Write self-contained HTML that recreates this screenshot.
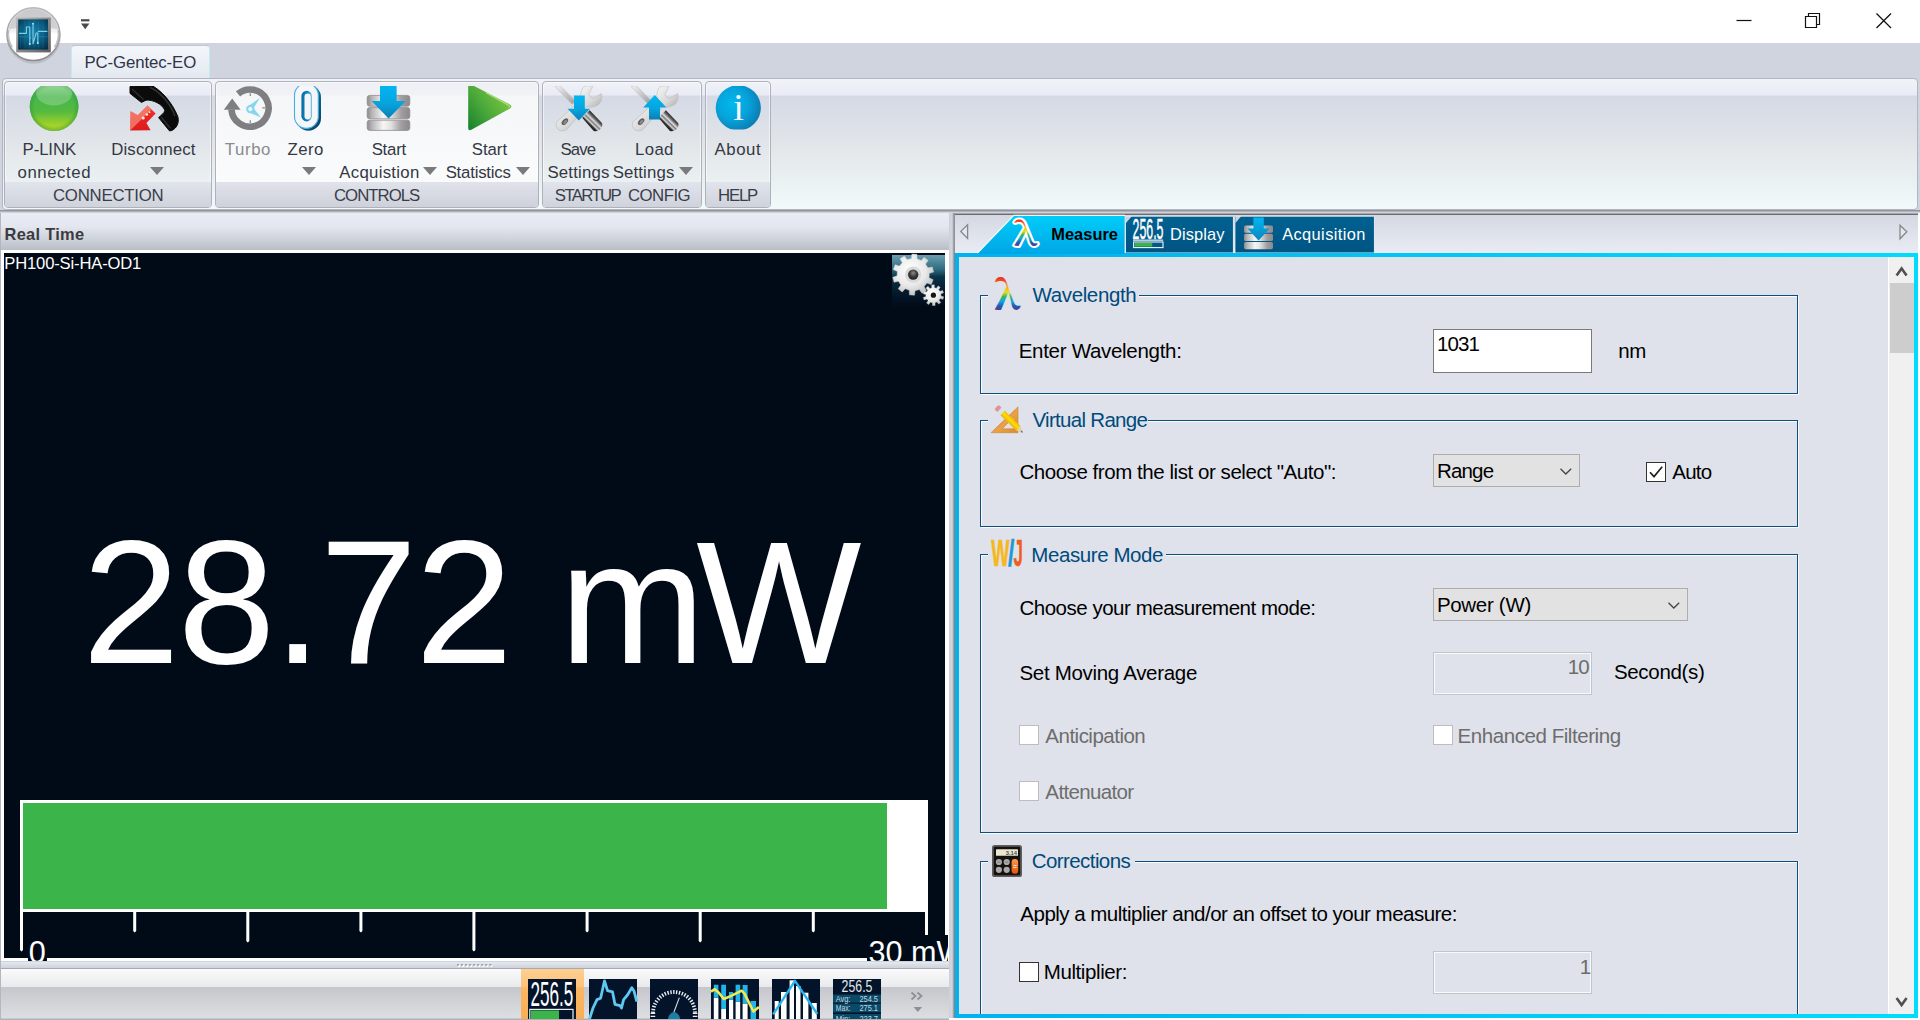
<!DOCTYPE html>
<html lang="en">
<head>
<meta charset="utf-8">
<title>PC-Gentec-EO</title>
<style>
*{box-sizing:border-box;margin:0;padding:0}
html,body{width:1920px;height:1020px;overflow:hidden;background:#fff;font-family:"Liberation Sans",sans-serif;color:#000}
.abs{position:absolute}
svg{position:absolute;overflow:visible}
#app{position:relative;width:1920px;height:1020px;overflow:hidden;background:#fff}
.t{position:absolute;white-space:nowrap;line-height:1;font-family:"Liberation Sans",sans-serif}
#tabrow{left:0;top:43px;width:1920px;height:168px;background:#cfd4de}
#maintab{left:71px;top:45px;width:139px;height:35px;background:linear-gradient(#f4f7fa,#e9edf4 60%,#e3e7f0);border:1px solid #c4eaf3;border-top-color:#c2c5cc;border-bottom:none;border-radius:4px 4px 0 0}
#ribbon{left:2px;top:78px;width:1916px;height:132px;border:1px solid #b3b6be;border-radius:4px;background:linear-gradient(#f1f3f8 0,#e8ebf4 16px,#d4d9e5 17px,#e3e7ea 70px,#eff7f8 122px,#f1f9fa 100%)}
#ribshadow{left:0;top:210px;width:1920px;height:3px;background:linear-gradient(#85878d,#b9bcc3 60%,#dfe2e8)}
.grp{position:absolute;top:81px;height:127px;border:1px solid #aeb1b9;border-radius:4px;overflow:hidden;box-shadow:inset 0 0 0 1px rgba(255,255,255,.55)}
.grp .lab{position:absolute;left:0;right:0;bottom:0;height:25px;background:linear-gradient(#e1e4ec,#cfd3dc)}
.grp.hot{background:linear-gradient(#eef0f5 0,#f1f2f6 13px,#f5f6f8 14px,#fbfcfc 100%)}
.grp.hot .lab{background:linear-gradient(#e0e3eb,#ced1da)}
.dd{position:absolute;width:0;height:0;border-left:7px solid transparent;border-right:7px solid transparent;border-top:8px solid #7a7a7a}
#leftbg{left:0;top:213px;width:955px;height:807px;background:linear-gradient(90deg,#b4b7bf 0,#b4b7bf 1px,#d6d9e1 1px)}
#rthead{left:1px;top:213px;width:948px;height:37px;background:linear-gradient(#e9ecf5 0,#e4e7f0 35%,#cfd3dc 70%,#b9bdc6 100%)}
#white{left:1px;top:250px;width:948px;height:711px;background:#fff}
#black{left:4px;top:253px;width:941px;height:705px;background:#010b18;overflow:hidden}
#vsplit{left:949px;top:213px;width:6px;height:807px;background:linear-gradient(90deg,#cdd0d8 0,#d3d6de 3px,#b4b7be 4px,#8c8e94 5px,#77797e 6px)}
#hsplit{left:1px;top:961px;width:948px;height:8px;background:linear-gradient(#b9bcc4 0,#e5e9f2 1px,#dde1ea 3px,#ced2db 7px,#a6a9b2 7px)}
#tbar{left:1px;top:969px;width:948px;height:51px;background:linear-gradient(#fafafb 0,#e9eaed 18px,#c5c7cc 18px,#dcdee2 49px,#b0b2b8 50px)}
</style>
</head>
<body>
<div id="app">
<div id="tabrow" class="abs"></div>
<div id="maintab" class="abs"></div>
<span class="t" style="left:84.42px;top:55.00px;font-size:16.8px;color:#2f3446;letter-spacing:-0.089px;">PC-Gentec-EO</span>
<div id="ribbon" class="abs"></div>
<div id="ribshadow" class="abs"></div>
<div class="grp" style="left:4px;width:208px"><div class="lab"></div></div>
<div class="grp hot" style="left:215px;width:324px"><div class="lab"></div></div>
<div class="grp" style="left:542px;width:160px"><div class="lab"></div></div>
<div class="grp" style="left:705px;width:66px"><div class="lab"></div></div>
<span class="t" style="left:52.96px;top:188.00px;font-size:16.8px;color:#3a3d48;letter-spacing:-0.225px;">CONNECTION</span>
<span class="t" style="left:333.96px;top:188.00px;font-size:16.8px;color:#3a3d48;letter-spacing:-0.992px;">CONTROLS</span>
<div><span class="t" style="left:554.84px;top:188.00px;font-size:16.8px;color:#3a3d48;letter-spacing:-1.638px;">STARTUP</span> <span class="t" style="left:627.96px;top:188.00px;font-size:16.8px;color:#3a3d48;letter-spacing:-0.510px;">CONFIG</span></div>
<span class="t" style="left:718.12px;top:188.00px;font-size:16.8px;color:#3a3d48;letter-spacing:-1.210px;">HELP</span>
<span class="t" style="left:22.62px;top:142.00px;font-size:16.8px;color:#343844;letter-spacing:-0.117px;">P-LINK</span>
<div class="abs" style="left:17.5px;top:163px;width:76px;height:24px;overflow:hidden"><span class="t" style="left:-12.70px;top:2px;font-size:16.8px;color:#343844;letter-spacing:0.564px">Connected</span></div>
<span class="t" style="left:111.22px;top:142.00px;font-size:16.8px;color:#343844;letter-spacing:0.143px;">Disconnect</span>
<span class="t" style="left:224.83px;top:142.00px;font-size:16.8px;color:#8b8b8f;letter-spacing:0.600px;">Turbo</span>
<span class="t" style="left:287.48px;top:142.00px;font-size:16.8px;color:#343844;letter-spacing:0.456px;">Zero</span>
<span class="t" style="left:371.64px;top:142.00px;font-size:16.8px;color:#343844;letter-spacing:-0.202px;">Start</span>
<span class="t" style="left:339.27px;top:165.00px;font-size:16.8px;color:#343844;letter-spacing:0.288px;">Acquistion</span>
<span class="t" style="left:471.84px;top:142.00px;font-size:16.8px;color:#343844;letter-spacing:-0.052px;">Start</span>
<span class="t" style="left:445.64px;top:165.00px;font-size:16.8px;color:#343844;letter-spacing:-0.206px;">Statistics</span>
<span class="t" style="left:560.54px;top:142.00px;font-size:16.8px;color:#343844;letter-spacing:-0.864px;">Save</span>
<span class="t" style="left:547.44px;top:165.00px;font-size:16.8px;color:#343844;letter-spacing:0.180px;">Settings</span>
<span class="t" style="left:635.12px;top:142.00px;font-size:16.8px;color:#343844;letter-spacing:0.330px;">Load</span>
<span class="t" style="left:612.64px;top:165.00px;font-size:16.8px;color:#343844;letter-spacing:0.152px;">Settings</span>
<span class="t" style="left:714.47px;top:142.00px;font-size:16.8px;color:#343844;letter-spacing:0.588px;">About</span>
<div class="dd" style="left:150px;top:166.7px"></div>
<div class="dd" style="left:302.2px;top:166.7px"></div>
<div class="dd" style="left:423px;top:166.7px"></div>
<div class="dd" style="left:516px;top:166.7px"></div>
<div class="dd" style="left:679px;top:166.7px"></div>

<svg style="left:0;top:0" width="1920" height="215" viewBox="0 0 1920 215">
<defs>
<clipPath id="cpTop"><rect x="0" y="86" width="1920" height="46"/></clipPath>
<linearGradient id="gBall" x1="0" y1="0" x2="0" y2="1"><stop offset="0" stop-color="#86cf83"/><stop offset=".3" stop-color="#45b64b"/><stop offset=".6" stop-color="#55ba3f"/><stop offset=".85" stop-color="#9ccf2c"/><stop offset="1" stop-color="#bcd92a"/></linearGradient>
<radialGradient id="gBallEdge" cx=".5" cy=".5" r=".5"><stop offset=".8" stop-color="#2d9a3a" stop-opacity="0"/><stop offset="1" stop-color="#2d9a3a" stop-opacity=".55"/></radialGradient>
<linearGradient id="gRed" x1="0" y1="0" x2="0" y2="1"><stop offset="0" stop-color="#ee3a2c"/><stop offset=".5" stop-color="#e62323"/><stop offset="1" stop-color="#dc1c1f"/></linearGradient>
<linearGradient id="gCyan" x1="0" y1="0" x2="0" y2="1"><stop offset="0" stop-color="#00b7f3"/><stop offset=".55" stop-color="#06a5df"/><stop offset="1" stop-color="#0b7fb4"/></linearGradient>
<linearGradient id="gMetal" x1="0" y1="0" x2="1" y2="0"><stop offset="0" stop-color="#8e8a8d"/><stop offset=".12" stop-color="#b9b7b9"/><stop offset=".38" stop-color="#f6f6f6"/><stop offset=".55" stop-color="#e3e3e3"/><stop offset=".8" stop-color="#a29da0"/><stop offset="1" stop-color="#8b878a"/></linearGradient>
<linearGradient id="gPlay" x1="0" y1="1" x2="1" y2="0.2"><stop offset="0" stop-color="#16802c"/><stop offset=".45" stop-color="#4aa83a"/><stop offset="1" stop-color="#86cc42"/></linearGradient>
<radialGradient id="gInfo" cx=".38" cy=".42" r=".62"><stop offset="0" stop-color="#00b9ee"/><stop offset=".55" stop-color="#06a3db"/><stop offset="1" stop-color="#0b7fb5"/></radialGradient>
<linearGradient id="gShaft" x1="0" y1="0" x2="1" y2="1"><stop offset="0" stop-color="#f4f4f4"/><stop offset="1" stop-color="#9a9a9a"/></linearGradient>
<linearGradient id="gHandle" gradientUnits="userSpaceOnUse" x1="32" y1="38.4" x2="39.8" y2="30.4"><stop offset="0" stop-color="#1c1c1c"/><stop offset=".16" stop-color="#333"/><stop offset=".3" stop-color="#d4d4d4"/><stop offset=".46" stop-color="#7c7c7c"/><stop offset=".6" stop-color="#dedede"/><stop offset=".8" stop-color="#6c6c6c"/><stop offset="1" stop-color="#2c2c2c"/></linearGradient>
<linearGradient id="gWrench" x1="0" y1="0" x2="1" y2="1"><stop offset="0" stop-color="#fafafa"/><stop offset=".6" stop-color="#d8d8d8"/><stop offset="1" stop-color="#a8a8a8"/></linearGradient>
<linearGradient id="gZeroSh" x1="0" y1="0" x2="1" y2="1"><stop offset="0" stop-color="#2d93c4"/><stop offset=".5" stop-color="#0f6c99"/><stop offset="1" stop-color="#053c5c"/></linearGradient>
<linearGradient id="gZeroIn" x1="0" y1="0" x2="1" y2="0"><stop offset="0" stop-color="#0a6ea4"/><stop offset=".6" stop-color="#0b86c0"/><stop offset="1" stop-color="#7cc0dc"/></linearGradient>
<g id="tools">
  <path d="M-0.8 0.6 L4.4 -0.6 L20.2 15.4 L16.4 18.2Z" fill="url(#gShaft)" stroke="#bdbdbd" stroke-width=".5"/>
  <path d="M1 36 L22 17 L28.4 23.4 L11 43.8 Q6 46.6 2.4 43.4 Q-1 40 1 36Z" fill="url(#gWrench)" stroke="#b9b9b9" stroke-width=".6"/>
  <ellipse cx="9.3" cy="35.6" rx="4" ry="2.3" transform="rotate(-47 9.3 35.6)" fill="#5a5a5a"/>
  <ellipse cx="9.6" cy="35.9" rx="2.6" ry="1.3" transform="rotate(-47 9.6 35.9)" fill="#8a8a8a"/>
  <path d="M27 2 Q30 -1.4 37.2 0.4 L33.2 8.2 Q33.6 11.8 37.4 12.4 L45.8 7.6 Q47.6 14 42.8 18.8 Q37 22.6 31.2 20.6 L28.4 23.4 L22 17 L25.4 13.8 Q24 7 27 2Z" fill="url(#gWrench)" stroke="#bdbdbd" stroke-width=".6"/>
  <path d="M26.6 31.7 L34.1 24.2 L46.3 37.1 Q47.6 40.2 44.6 43.2 Q41.2 46.2 37.9 44.7Z" fill="url(#gHandle)"/>
</g>
</defs>
<!-- app button -->
<defs>
<linearGradient id="gOrb" x1="0" y1="0" x2="0" y2="1"><stop offset="0" stop-color="#d4d4d6"/><stop offset=".45" stop-color="#f2f2f3"/><stop offset=".5" stop-color="#ffffff"/><stop offset="1" stop-color="#ffffff"/></linearGradient>
<linearGradient id="gOrbRing" x1="0" y1="0" x2="0" y2="1"><stop offset="0" stop-color="#b9b9bb"/><stop offset="1" stop-color="#8c8c90"/></linearGradient>
<radialGradient id="gLogo" cx=".5" cy=".42" r=".7"><stop offset="0" stop-color="#1583ae"/><stop offset=".55" stop-color="#0a5c80"/><stop offset="1" stop-color="#032f48"/></radialGradient>
<linearGradient id="gFrame" x1="0" y1="0" x2="1" y2="1"><stop offset="0" stop-color="#b8b8b8"/><stop offset="1" stop-color="#5e5e5e"/></linearGradient>
</defs>
<ellipse cx="33.6" cy="36.4" rx="27.2" ry="27.4" fill="#8d8d93" opacity=".32"/>
<circle cx="33.4" cy="34.2" r="26.4" fill="url(#gOrb)" stroke="url(#gOrbRing)" stroke-width="1.5"/>
<path d="M8.6 29.4 A25.4 25.4 0 0 1 58.2 29.4 Q33.4 23 8.6 29.4Z" fill="#bfbfc3" opacity=".6"/>
<path d="M8.2 30 A25.6 25.6 0 0 0 12 47.5 M58.6 30 A25.6 25.6 0 0 1 54.8 47.5" fill="none" stroke="#a9a9ad" stroke-width="2.4" opacity=".7"/>
<rect x="16.2" y="17.6" width="34.6" height="34.8" fill="url(#gFrame)"/>
<rect x="18.2" y="19.4" width="29.8" height="30.2" fill="url(#gLogo)"/>
<path d="M20.5 25 V48 M25 21 V48 M29.5 21 V48 M34 21 V48 M38.5 21 V48 M43 21 V48" stroke="#3aa6cf" stroke-width=".5" opacity=".35"/>
<path d="M19 33.4 H26.4 V27 H29.8 V43.8 M29.8 38 H31 M33 23.4 V43.8 L36.2 33 H37.8 V42.6 M37.8 31.4 H47.4" fill="none" stroke="#8fd8f0" stroke-width="1.1" stroke-linejoin="round" opacity=".9"/>
<path d="M19 36.8 H47.6" stroke="#2f9fc9" stroke-width=".7" opacity=".55"/>
<circle cx="29.8" cy="44" r="1" fill="#b8ecfa"/><circle cx="37.8" cy="43" r="1" fill="#b8ecfa"/><circle cx="33" cy="23.6" r=".9" fill="#b8ecfa"/>
<!-- QAT -->
<rect x="81" y="19.2" width="8.4" height="2.2" fill="#4a4a4a"/>
<path d="M81 23.4 H89.4 L85.2 29.2Z" fill="#4a4a4a"/>
<!-- window buttons -->
<path d="M1736.5 20.5 H1751.5" stroke="#111" stroke-width="1.2"/>
<path d="M1805.5 16.5 H1816.5 V27.5 H1805.5Z M1808.5 16 V13.5 H1819.5 V24.5 H1817" fill="none" stroke="#111" stroke-width="1.2"/>
<path d="M1876.5 13.5 L1891 28 M1891 13.5 L1876.5 28" stroke="#111" stroke-width="1.3"/>

<!-- P-LINK ball -->
<g clip-path="url(#cpTop)">
<circle cx="54.1" cy="106.6" r="24.4" fill="url(#gBall)"/>
<circle cx="54.1" cy="106.6" r="24.4" fill="url(#gBallEdge)"/>
<ellipse cx="54.1" cy="93" rx="18" ry="12.5" fill="#ffffff" opacity=".22"/>
</g>
<!-- phone -->
<g clip-path="url(#cpTop)">
<path d="M130 86.6 L150.6 84.8 C161 90 172 102 177.8 116.6 C179.8 124 175.4 130.2 169.6 131 L158.6 117.6 C161 115 164.2 113.6 164.8 110.4 C162.6 104 152.4 99.4 146 100.2 L141.4 102.4 L130 93.4Z" fill="#0b0b0b" stroke="#0b0b0b" stroke-width="1" stroke-linejoin="round"/>
<path d="M150 87.4 C160 92 170 103 175 116" fill="none" stroke="#5a5a5a" stroke-width="1.4" opacity=".55"/>
<path d="M132 89 L143.6 99.6 M161.2 117 L170.4 128.4" stroke="#4c4c4c" stroke-width="1.2" opacity=".6"/>
<path d="M130.2 130.6 L130.6 111.2 L137.8 115.2 L147.5 105.6 L155.6 113.4 L146.4 123.1 L150.6 130.2Z" fill="url(#gRed)"/>
<path d="M130.2 130.6 L130.6 111.2 L137.8 115.2 L147.5 105.6 L151.5 109.5Z" fill="#f8927a" opacity=".7"/>
<circle cx="143.2" cy="118" r="1.6" fill="#ffe9dc"/><circle cx="146.8" cy="114.5" r="1.3" fill="#ffe9dc"/><circle cx="149.5" cy="112.2" r=".9" fill="#ffe9dc"/>
</g>
<!-- Turbo -->
<path d="M238.04 93.85 A18.6 18.6 0 1 1 231.45 109.4" fill="none" stroke="#7f7f81" stroke-width="6.6"/>
<path d="M232.2 98.4 L223.8 109.8 L240.6 109.8Z" fill="#7f7f81"/>
<path d="M250.3 93.2 V96 M265 107.8 H262.2 M250.3 123 V120.2" stroke="#8e8e90" stroke-width="1.3"/>
<path d="M248.4 106 L260 97.8 L253.6 108.2 L261 117.6 L248.8 112.2Z" fill="#86d6ee"/>
<circle cx="250.3" cy="109.1" r="4.2" fill="#86d6ee"/><circle cx="250.3" cy="109.1" r="2.1" fill="#f3f6f9"/>
<!-- Zero -->
<g clip-path="url(#cpTop)">
<rect x="295.8" y="84.8" width="25.2" height="46" rx="12.6" fill="url(#gZeroSh)"/>
<rect x="294.5" y="83.4" width="23.8" height="45" rx="11.9" fill="#f5f6f9" stroke="#45afe0" stroke-width="1.1"/>
<rect x="301.4" y="90.8" width="10.5" height="30.6" rx="5.25" fill="url(#gZeroIn)"/>
<rect x="304.5" y="93.4" width="6.3" height="26" rx="3.15" fill="#f3f5f8"/>
</g>
<!-- Start acquisition -->
<g clip-path="url(#cpTop)">
<g stroke="#8f8b8e" stroke-width=".8"><rect x="367.2" y="95.4" width="42.6" height="10.8" rx="2.4" fill="url(#gMetal)"/>
<rect x="367.2" y="107.6" width="42.6" height="11.2" rx="2.4" fill="url(#gMetal)"/>
<rect x="367.2" y="120.2" width="42.6" height="10.2" rx="2.4" fill="url(#gMetal)"/></g>
<path d="M380 84 H396.6 V101 H405.8 L388.6 118.4 L371.6 101 H380Z" fill="url(#gCyan)"/>
</g>
<!-- Start statistics -->
<g clip-path="url(#cpTop)">
<path d="M468.2 85 Q468.2 83 471 84.4 L510 104.6 Q512.6 106.6 510 108.6 L471.4 129.8 Q468.2 131.2 468.2 128Z" fill="url(#gPlay)"/>
<path d="M486 92.8 L508.6 105.2 Q510 106.4 508.8 107.6" fill="none" stroke="#b2e384" stroke-width="1.1" opacity=".9"/>
</g>
<!-- Save settings -->
<g clip-path="url(#cpTop)">
<use href="#tools" x="555.6" y="86"/>
<path d="M574 95.4 H584.8 V108.8 H590 L578.8 120.4 L567.6 108.8 H574Z" fill="url(#gCyan)"/>
<use href="#tools" x="631.8" y="86"/>
<path d="M654.8 95 L666.4 107.4 H660 V119.6 H649 V107.4 H643.2Z" fill="url(#gCyan)"/>
</g>
<!-- About -->
<clipPath id="cpInfo"><rect x="700" y="86" width="80" height="43.5"/></clipPath>
<g clip-path="url(#cpInfo)">
<circle cx="738.3" cy="107.8" r="22.6" fill="url(#gInfo)"/>
<text x="738.6" y="120.2" text-anchor="middle" font-family="Liberation Serif,serif" font-size="38.5" fill="#f1f6fd">i</text>
</g>
</svg>

<div id="leftbg" class="abs"></div>
<div id="rthead" class="abs"></div>
<span class="t" style="left:4.52px;top:226.00px;font-size:16.4px;color:#3b3b3f;letter-spacing:0.308px;font-weight:bold;">Real Time</span>
<div id="white" class="abs"></div>
<div id="black" class="abs"></div>
<span class="t" style="left:4.24px;top:256.00px;font-size:16.6px;color:#fff;letter-spacing:-0.152px;">PH100-Si-HA-OD1</span>
<div><span class="t" style="left:82.22px;top:515.00px;font-size:175.5px;color:#fff;letter-spacing:-2.138px;">28.72</span> <span class="t" style="left:559.45px;top:515.00px;font-size:175px;color:#fff;letter-spacing:-8.900px;">mW</span></div>
<div class="abs" style="left:20px;top:800px;width:908px;height:112px;background:#fff"></div>
<div class="abs" style="left:23px;top:803px;width:864px;height:106px;background:#3bb44a"></div>
<svg style="left:0;top:0" width="950" height="1020"><path d="M20 911 H23 V950.0 L21.5 951.5 L20 950.0Z M133.2 911 H136.2 V931.0 L134.7 932.5 L133.2 931.0Z M246.3 911 H249.3 V941.0 L247.8 942.5 L246.3 941.0Z M359.4 911 H362.4 V931.0 L360.9 932.5 L359.4 931.0Z M472.4 911 H475.4 V950.0 L473.9 951.5 L472.4 950.0Z M585.6 911 H588.6 V931.0 L587.1 932.5 L585.6 931.0Z M698.7 911 H701.7 V941.0 L700.2 942.5 L698.7 941.0Z M811.8 911 H814.8 V931.0 L813.3 932.5 L811.8 931.0Z M925 911 H928 V950.0 L926.5 951.5 L925 950.0Z" fill="#fff"/></svg>
<div class="abs" style="left:28px;top:935px;width:19px;height:26px;background:#010b18"></div>
<div class="abs" style="left:867px;top:935px;width:81px;height:26px;background:#010b18;overflow:hidden"></div>
<div class="abs" style="left:0;top:930px;width:948px;height:31px;overflow:hidden"><span class="t" style="left:28.81px;top:7.00px;font-size:30.6px;color:#fff;">0</span><span class="t" style="left:868.44px;top:7.00px;font-size:30.6px;color:#fff;">30 mW</span></div>

<svg style="left:892px;top:255px" width="53" height="52" viewBox="892 255 53 52">
<defs>
<linearGradient id="gGearBg" x1="0" y1="0" x2="0" y2="1"><stop offset="0" stop-color="#6a9fb0"/><stop offset=".28" stop-color="#2e6a80"/><stop offset=".42" stop-color="#0b3247"/><stop offset=".75" stop-color="#04172a"/><stop offset="1" stop-color="#010b18"/></linearGradient>
<radialGradient id="gGear" cx=".42" cy=".38" r=".7"><stop offset="0" stop-color="#ffffff"/><stop offset=".55" stop-color="#e9e9e9"/><stop offset="1" stop-color="#b9b9b9"/></radialGradient>
<radialGradient id="gHub" cx=".5" cy=".35" r=".7"><stop offset="0" stop-color="#8a8a8a"/><stop offset=".5" stop-color="#3c3c3c"/><stop offset="1" stop-color="#1a1a1a"/></radialGradient>
</defs>
<rect x="892" y="255" width="53" height="52" fill="url(#gGearBg)"/>
<path d="M929.08 277.82 L933.16 279.70 L931.26 284.50 L927.00 283.09 L924.15 286.54 L926.35 290.46 L921.99 293.23 L919.37 289.58 L915.05 290.69 L914.52 295.16 L909.36 294.84 L909.39 290.34 L905.23 288.71 L902.18 292.00 L898.20 288.72 L900.86 285.10 L898.46 281.33 L894.05 282.20 L892.77 277.20 L897.05 275.84 L897.32 271.38 L893.24 269.50 L895.14 264.70 L899.40 266.11 L902.25 262.66 L900.05 258.74 L904.41 255.97 L907.03 259.62 L911.35 258.51 L911.88 254.04 L917.04 254.36 L917.01 258.86 L921.17 260.49 L924.22 257.20 L928.20 260.48 L925.54 264.10 L927.94 267.87 L932.35 267.00 L933.63 272.00 L929.35 273.36Z" fill="url(#gGear)" stroke="#c9c9c9" stroke-width=".5" stroke-linejoin="round"/>
<circle cx="913.2" cy="274.6" r="8.2" fill="#d9d9d9"/>
<circle cx="913.2" cy="274.6" r="5.2" fill="url(#gHub)"/>
<path d="M940.96 295.96 L943.68 296.76 L942.97 299.27 L940.24 298.52 L939.07 300.26 L940.80 302.50 L938.75 304.12 L936.98 301.90 L935.02 302.63 L935.10 305.46 L932.49 305.56 L932.36 302.73 L930.34 302.16 L928.74 304.50 L926.58 303.05 L928.13 300.68 L926.84 299.03 L924.17 299.98 L923.27 297.54 L925.92 296.53 L925.84 294.44 L923.12 293.64 L923.83 291.13 L926.56 291.88 L927.73 290.14 L926.00 287.90 L928.05 286.28 L929.82 288.50 L931.78 287.77 L931.70 284.94 L934.31 284.84 L934.44 287.67 L936.46 288.24 L938.06 285.90 L940.22 287.35 L938.67 289.72 L939.96 291.37 L942.63 290.42 L943.53 292.86 L940.88 293.87Z" fill="url(#gGear)" stroke="#c9c9c9" stroke-width=".4" stroke-linejoin="round"/>
<circle cx="933.4" cy="295.2" r="2.6" fill="#151515"/>
</svg>

<div id="vsplit" class="abs"></div>
<div id="hsplit" class="abs"></div>
<div id="tbar" class="abs"></div>

<svg style="left:0;top:960px" width="950" height="60" viewBox="0 960 950 60">
<defs>
<linearGradient id="gSel" x1="0" y1="0" x2="0" y2="1"><stop offset="0" stop-color="#fdd093"/><stop offset=".35" stop-color="#fcc27a"/><stop offset=".37" stop-color="#fbb765"/><stop offset="1" stop-color="#f9ad55"/></linearGradient>
<clipPath id="cpB"><rect x="0" y="960" width="950" height="59"/></clipPath>
</defs>
<g fill="#fdfdfe"><rect x="458.00" y="965" width="2" height="2"/><rect x="462.04" y="965" width="2" height="2"/><rect x="466.08" y="965" width="2" height="2"/><rect x="470.12" y="965" width="2" height="2"/><rect x="474.16" y="965" width="2" height="2"/><rect x="478.20" y="965" width="2" height="2"/><rect x="482.24" y="965" width="2" height="2"/><rect x="486.28" y="965" width="2" height="2"/><rect x="490.32" y="965" width="2" height="2"/></g>
<g fill="#9a9ea8"><rect x="457.00" y="964" width="2" height="1.6"/><rect x="461.04" y="964" width="2" height="1.6"/><rect x="465.08" y="964" width="2" height="1.6"/><rect x="469.12" y="964" width="2" height="1.6"/><rect x="473.16" y="964" width="2" height="1.6"/><rect x="477.20" y="964" width="2" height="1.6"/><rect x="481.24" y="964" width="2" height="1.6"/><rect x="485.28" y="964" width="2" height="1.6"/><rect x="489.32" y="964" width="2" height="1.6"/></g>
<g clip-path="url(#cpB)">
<rect x="521" y="969" width="63" height="51" fill="url(#gSel)"/>
<rect x="528" y="979" width="48" height="41" fill="#03142a"/><rect x="589" y="979" width="48" height="41" fill="#03142a"/><rect x="650" y="979" width="48" height="41" fill="#03142a"/><rect x="711" y="979" width="48" height="41" fill="#03142a"/><rect x="772" y="979" width="48" height="41" fill="#03142a"/><rect x="833" y="979" width="48" height="41" fill="#03142a"/>
<!-- 1: numeric -->
<text x="530.4" y="1005.8" font-family="Liberation Sans,sans-serif" font-size="35.4" fill="#fff" textLength="42.8" lengthAdjust="spacingAndGlyphs">256.5</text>
<rect x="529.8" y="1009.4" width="43.2" height="12" fill="none" stroke="#e8eef0" stroke-width="1.2"/>
<rect x="531" y="1010.4" width="28" height="10" fill="#3bb44a"/>
<!-- 2: line -->
<path d="M589.2 1020 L593 1008 L597 999.6 L600.6 998.2 L604.5 980.8 L607.5 990.7 L612.5 991.8 L615 1004.4 L620 1005.6 L621.5 1008 L623.6 999.6 L627.5 995 L631.8 987.8 L634 991 L636.8 1001.6" fill="none" stroke="#5fc8f0" stroke-width="2.8" stroke-linejoin="round"/>
<!-- 3: gauge -->
<path d="M653 1013 A21 21 0 0 1 695 1013" fill="none" stroke="#e8eef2" stroke-width="3.8" stroke-dasharray="1.4 1.5"/>
<path d="M650.6 1013.4 H655.2 M650.6 1016.4 H655.2 M692.8 1013.4 H697.4 M692.8 1016.4 H697.4" stroke="#e8eef2" stroke-width="1.2"/>
<path d="M673.8 1012.5 L679.3 997.6" stroke="#d8e0e4" stroke-width="1.1"/>
<path d="M667.8 1020 Q668.4 1014 674 1011.6 Q679.8 1014 680.4 1020Z" fill="#1a7fa6"/>
<!-- 4: bars + line -->
<g fill="#fff"><rect x="713.8" y="997.6" width="4.6" height="24"/><rect x="721.2" y="1009" width="4.8" height="12"/><rect x="729" y="999.6" width="4.2" height="22"/><rect x="735.6" y="1001.6" width="4.6" height="20"/><rect x="742.6" y="1003.5" width="5" height="18"/></g>
<g fill="#1fb4ec"><rect x="713.8" y="984.7" width="4.6" height="12.9"/><rect x="721.2" y="984.7" width="4.8" height="24.3"/><rect x="729" y="992" width="4.2" height="7.6"/><rect x="735.6" y="984.7" width="4.6" height="16.9"/><rect x="742.6" y="985" width="5" height="18.5"/><rect x="750.5" y="1001" width="5.5" height="20"/></g>
<path d="M711 991.7 L714.8 989.2 L718.8 992.7 L723.8 999 L731.7 995.6 L741.6 990.7 L744.5 993.6 L753.4 1011.5 L758.9 1007" fill="none" stroke="#f6e84e" stroke-width="2.6" stroke-linejoin="round"/>
<!-- 5: histogram -->
<g fill="#fff"><rect x="774.7" y="1001" width="4" height="20"/><rect x="781" y="992" width="5.6" height="29"/><rect x="789.6" y="980.3" width="4.4" height="41"/><rect x="796" y="986" width="4.5" height="35"/><rect x="803" y="992.7" width="5.4" height="29"/><rect x="811.8" y="1003" width="5" height="18"/></g>
<path d="M773.2 1014.4 L795 980.8 L817.3 1014" fill="none" stroke="#2bb5ef" stroke-width="2.4" stroke-linejoin="round"/>
<!-- 6: stats -->
<text x="841.6" y="991.8" font-family="Liberation Sans,sans-serif" font-size="15.6" fill="#e4eaee" textLength="30.8" lengthAdjust="spacingAndGlyphs">256.5</text>
<rect x="833" y="994.6" width="48" height="8" fill="#0b4a67"/><rect x="833" y="1003.6" width="48" height="8.8" fill="#0b4a67"/><rect x="833" y="1014" width="48" height="8" fill="#0b4a67"/>
<g font-family="Liberation Sans,sans-serif" font-size="8.6" fill="#c4d9e3"><text x="835.8" y="1001.8" textLength="14.6" lengthAdjust="spacingAndGlyphs">Avg:</text><text x="859.4" y="1001.8" textLength="18.6" lengthAdjust="spacingAndGlyphs">254.5</text>
<text x="835.8" y="1011" textLength="14.6" lengthAdjust="spacingAndGlyphs">Max:</text><text x="859.4" y="1011" textLength="18.6" lengthAdjust="spacingAndGlyphs">275.1</text>
<text x="835.8" y="1021.6" textLength="14.6" lengthAdjust="spacingAndGlyphs">Min:</text><text x="859.4" y="1021.6" textLength="18.6" lengthAdjust="spacingAndGlyphs">223.7</text></g>
</g>
<path d="M911.5 992.5 L915.5 996 L911.5 999.5 M917.5 992.5 L921.5 996 L917.5 999.5" fill="none" stroke="#8d9096" stroke-width="1.8"/>
<path d="M913.6 1007 H922 L917.8 1012Z" fill="#8d9096"/>
</svg>

<div class="abs" style="left:954px;top:213px;width:964px;height:40px;background:linear-gradient(#a4a7af 0,#a4a7af 1px,#6c6c6f 1px,#6c6c6f 2px,#d4d8e2 2px,#e9ecf5 100%);border-left:1px solid #8f9299"></div>
<div class="abs" style="left:955px;top:252.5px;width:963px;height:765px;background:linear-gradient(90deg,#00b2ee,#00dcfb)"></div>
<div class="abs" style="left:1918px;top:213px;width:2px;height:807px;background:#fff"></div>
<div class="abs" style="left:949px;top:1018px;width:971px;height:2px;background:#fff"></div>
<div class="abs" style="left:959px;top:257px;width:954.5px;height:756.7px;background:#dfe2ea"></div>
<div class="abs" style="left:1888px;top:257px;width:26px;height:757px;background:linear-gradient(90deg,#fff 0,#fff 1px,#f0f0f0 1px)"></div>
<div class="abs" style="left:1890px;top:283px;width:24px;height:70px;background:#cdcdcd"></div>
<svg style="left:1888px;top:257px" width="26" height="757"><path d="M8.6 18.4 L13.6 11.4 L18.6 18.4 M8.6 741 L13.6 748 L18.6 741" fill="none" stroke="#505050" stroke-width="2.6"/></svg>

<svg style="left:954px;top:213px" width="966" height="45" viewBox="954 213 966 45">
<defs>
<linearGradient id="gTabA" x1="0" y1="0" x2="0" y2="1"><stop offset="0" stop-color="#00cdf9"/><stop offset="1" stop-color="#00a6e6"/></linearGradient>
<linearGradient id="gTabB" x1="0" y1="0" x2="0" y2="1"><stop offset="0" stop-color="#006293"/><stop offset="1" stop-color="#005482"/></linearGradient>
<linearGradient id="gRain" x1="0" y1="0" x2="0" y2="1"><stop offset="0" stop-color="#e8452c"/><stop offset=".22" stop-color="#f2a21e"/><stop offset=".4" stop-color="#e8d820"/><stop offset=".58" stop-color="#3fb54a"/><stop offset=".78" stop-color="#1d7fd0"/><stop offset="1" stop-color="#6a2fa0"/></linearGradient>
<linearGradient id="gMetal2" x1="0" y1="0" x2="1" y2="0"><stop offset="0" stop-color="#8e8a8d"/><stop offset=".12" stop-color="#b9b7b9"/><stop offset=".38" stop-color="#f6f6f6"/><stop offset=".55" stop-color="#e3e3e3"/><stop offset=".8" stop-color="#a29da0"/><stop offset="1" stop-color="#8b878a"/></linearGradient>
<linearGradient id="gCyan2" x1="0" y1="0" x2="0" y2="1"><stop offset="0" stop-color="#00b7f3"/><stop offset="1" stop-color="#0b86bd"/></linearGradient>
</defs>
<path d="M960.8 231.4 L967.6 224.8 V238.4Z" fill="#e4e7ee" stroke="#85878c" stroke-width="1.3"/>
<path d="M1906.8 231.8 L1900 225.2 V238.8Z" fill="#e4e7ee" stroke="#85878c" stroke-width="1.3"/>
<path d="M1126 216 H1233 V252.5 H1126Z" fill="url(#gTabB)"/>
<path d="M1235.4 216 H1374 V252.5 H1235.4Z" fill="url(#gTabB)"/>
<path d="M1126 216 L1132 216 L1126 223Z M1235.4 216 L1241.4 216 L1235.4 223Z" fill="#c9d3df"/>
<path d="M977 254 L1013.6 215.6 H1124.6 V254Z" fill="url(#gTabA)"/>
<path d="M977.4 253 L1013.8 215.4 H1125" fill="none" stroke="#f2f6fa" stroke-width="1.3"/>
<!-- lambda in tab -->
<linearGradient id="gRainT" gradientUnits="userSpaceOnUse" x1="0" y1="-26.6" x2="0" y2="0.5"><stop offset="0" stop-color="#ee3524"/><stop offset=".15" stop-color="#f26a21"/><stop offset=".3" stop-color="#fbb515"/><stop offset=".42" stop-color="#e6e01e"/><stop offset=".56" stop-color="#3db54a"/><stop offset=".7" stop-color="#10a8e0"/><stop offset=".85" stop-color="#1c5db0"/><stop offset="1" stop-color="#6d2a90"/></linearGradient>
<g transform="translate(1013.4 246.3) scale(1.24 1)"><text x="0" y="0" font-family="Noto Serif CJK SC,Liberation Serif,serif" font-weight="500" font-size="32" fill="url(#gRainT)" stroke="#fff" stroke-width="3.8" stroke-linejoin="round" paint-order="stroke">λ</text></g>
<!-- 256.5 icon -->
<text x="1132.6" y="238.8" font-family="Liberation Sans,sans-serif" font-size="30" fill="#fff" stroke="#fff" stroke-width=".5" textLength="30.8" lengthAdjust="spacingAndGlyphs">256.5</text>
<rect x="1133" y="239.6" width="30.2" height="1.1" fill="#fff"/>
<rect x="1133.6" y="242" width="29.4" height="5.6" fill="#005988" stroke="#f2f5f7" stroke-width="1.1"/>
<rect x="1134.6" y="243" width="17.6" height="3.6" fill="#3bb44a"/>
<!-- db icon -->
<rect x="1244" y="225.4" width="29" height="7.4" rx="1.6" fill="url(#gMetal2)"/>
<rect x="1244" y="233.7" width="29" height="7.3" rx="1.6" fill="url(#gMetal2)"/>
<rect x="1244" y="241.9" width="29" height="7.3" rx="1.6" fill="url(#gMetal2)"/>
<path d="M1253.4 217.4 H1263.8 V228.4 H1269.8 L1258.6 240.6 L1247.4 228.4 H1253.4Z" fill="url(#gCyan2)"/>
<path d="M1126 216.4 H1233.4 V252.5 M1235.4 216.4 H1374.4 V252.5" fill="none" stroke="#dfe6ee" stroke-width="1" opacity=".8"/>
</svg>

<span class="t" style="left:1051.32px;top:226.00px;font-size:16.4px;color:#000;letter-spacing:0.018px;font-weight:bold;">Measure</span>
<span class="t" style="left:1170.06px;top:226.00px;font-size:16.4px;color:#fff;letter-spacing:0.100px;">Display</span>
<span class="t" style="left:1282.17px;top:226.00px;font-size:16.4px;color:#fff;letter-spacing:0.397px;">Acquisition</span>
<div class="abs" style="left:980px;top:295.0px;width:817.5px;height:98.60000000000002px;border:1px solid #0c4f7c;box-shadow:inset 1px 1px 0 rgba(255,255,255,.85),1px 1px 0 rgba(255,255,255,.85)"></div><div class="abs" style="left:987.9px;top:293.5px;width:150.69999999999993px;height:6px;background:#dfe2ea"></div>
<div class="abs" style="left:980px;top:420.1px;width:817.5px;height:107.10000000000002px;border:1px solid #0c4f7c;box-shadow:inset 1px 1px 0 rgba(255,255,255,.85),1px 1px 0 rgba(255,255,255,.85)"></div><div class="abs" style="left:987.9px;top:418.6px;width:159.69999999999993px;height:6px;background:#dfe2ea"></div>
<div class="abs" style="left:980px;top:553.9px;width:817.5px;height:279.6px;border:1px solid #0c4f7c;box-shadow:inset 1px 1px 0 rgba(255,255,255,.85),1px 1px 0 rgba(255,255,255,.85)"></div><div class="abs" style="left:987.9px;top:552.4px;width:178.10000000000002px;height:6px;background:#dfe2ea"></div>
<div class="abs" style="left:980px;top:861.1px;width:817.5px;height:152.89999999999998px;border:1px solid #0c4f7c;border-bottom:none;box-shadow:inset 1px 1px 0 rgba(255,255,255,.85),1px 0px 0 rgba(255,255,255,.85)"></div><div class="abs" style="left:987.9px;top:859.6px;width:146.69999999999993px;height:6px;background:#dfe2ea"></div>
<span class="t" style="left:1032.52px;top:285.00px;font-size:20.5px;color:#004a7c;letter-spacing:-0.368px;">Wavelength</span>
<span class="t" style="left:1032.52px;top:410.00px;font-size:20.5px;color:#004a7c;letter-spacing:-0.705px;">Virtual Range</span>
<span class="t" style="left:1031.32px;top:545.00px;font-size:20.5px;color:#004a7c;letter-spacing:-0.414px;">Measure Mode</span>
<span class="t" style="left:1031.77px;top:851.00px;font-size:20.5px;color:#004a7c;letter-spacing:-0.585px;">Corrections</span>
<span class="t" style="left:1018.72px;top:341.00px;font-size:20.5px;color:#000;letter-spacing:-0.297px;">Enter Wavelength:</span>
<div class="abs" style="left:1433.3px;top:329px;width:158.7px;height:43.8px;background:#fff;border:1.2px solid #7a7a7a"></div>
<span class="t" style="left:1437.04px;top:334.00px;font-size:20.5px;color:#000;letter-spacing:-0.883px;">1031</span>
<span class="t" style="left:1618.25px;top:341.00px;font-size:20.5px;color:#000;letter-spacing:-0.389px;">nm</span>
<span class="t" style="left:1019.38px;top:462.00px;font-size:20.5px;color:#000;letter-spacing:-0.446px;">Choose from the list or select &quot;Auto&quot;:</span>
<div class="abs" style="left:1433.3px;top:454px;width:146.4px;height:32.6px;background:#e2e2e2;border:1.2px solid #adadad"></div>
<span class="t" style="left:1436.92px;top:461.00px;font-size:20.5px;color:#000;letter-spacing:-0.808px;">Range</span>
<svg style="left:1560.4px;top:467.8px" width="12" height="7"><path d="M0.5 0.8 L5.8 6 L11.2 0.8" fill="none" stroke="#444" stroke-width="1.3"/></svg>
<div class="abs" style="left:1646px;top:462px;width:20px;height:20px;background:#fff;border:1.5px solid #333"></div><svg style="left:1646px;top:462px" width="20" height="20"><path d="M4 10.2 L8 14.6 L16.2 4.8" fill="none" stroke="#222" stroke-width="1.7"/></svg>
<span class="t" style="left:1672.36px;top:462.00px;font-size:20.5px;color:#000;letter-spacing:-0.829px;">Auto</span>
<span class="t" style="left:1019.38px;top:598.00px;font-size:20.5px;color:#000;letter-spacing:-0.473px;">Choose your measurement mode:</span>
<div class="abs" style="left:1433.3px;top:588.4px;width:254.4px;height:32.2px;background:#e2e2e2;border:1.2px solid #adadad"></div>
<span class="t" style="left:1436.92px;top:595.00px;font-size:20.5px;color:#000;letter-spacing:-0.306px;">Power (W)</span>
<svg style="left:1668.4px;top:601.8px" width="12" height="7"><path d="M0.5 0.8 L5.8 6 L11.2 0.8" fill="none" stroke="#444" stroke-width="1.3"/></svg>
<span class="t" style="left:1019.48px;top:663.00px;font-size:20.5px;color:#000;letter-spacing:-0.311px;">Set Moving Average</span>
<div class="abs" style="left:1433.3px;top:651.6px;width:158.7px;height:43px;background:#dfe2ea;border:1px solid #c2c4ca;box-shadow:inset 0 0 0 1px #f8f9fb"></div>
<span class="t" style="left:1567.84px;top:657.00px;font-size:20.5px;color:#6d6d6d;letter-spacing:-0.859px;">10</span>
<span class="t" style="left:1613.88px;top:662.00px;font-size:20.5px;color:#000;letter-spacing:-0.306px;">Second(s)</span>
<div class="abs" style="left:1019px;top:725.2px;width:20px;height:20px;background:#fff;border:1.5px solid #bdbdbd"></div>
<span class="t" style="left:1045.36px;top:726.00px;font-size:20.5px;color:#6d6d6d;letter-spacing:-0.512px;">Anticipation</span>
<div class="abs" style="left:1433.3px;top:725px;width:20px;height:20px;background:#fff;border:1.5px solid #bdbdbd"></div>
<span class="t" style="left:1457.52px;top:726.00px;font-size:20.5px;color:#6d6d6d;letter-spacing:-0.432px;">Enhanced Filtering</span>
<div class="abs" style="left:1019px;top:781px;width:20px;height:20px;background:#fff;border:1.5px solid #bdbdbd"></div>
<span class="t" style="left:1045.36px;top:782.00px;font-size:20.5px;color:#6d6d6d;letter-spacing:-0.646px;">Attenuator</span>
<span class="t" style="left:1020.36px;top:904.00px;font-size:20.5px;color:#000;letter-spacing:-0.516px;">Apply a multiplier and/or an offset to your measure:</span>
<div class="abs" style="left:1018.8px;top:962px;width:20px;height:20px;background:#fff;border:1.5px solid #333"></div>
<span class="t" style="left:1043.72px;top:962.00px;font-size:20.5px;color:#000;letter-spacing:-0.397px;">Multiplier:</span>
<div class="abs" style="left:1433.3px;top:951.4px;width:158.4px;height:42.8px;background:#dfe2ea;border:1px solid #c2c4ca;box-shadow:inset 0 0 0 1px #f8f9fb"></div>
<span class="t" style="left:1579.84px;top:957.00px;font-size:20.5px;color:#6d6d6d;">1</span>

<svg style="left:985px;top:270px" width="50" height="620" viewBox="985 270 50 620">
<defs>
<linearGradient id="gRain2" x1="0" y1="0" x2="0" y2="1"><stop offset="0" stop-color="#e8452c"/><stop offset=".2" stop-color="#f2a21e"/><stop offset=".38" stop-color="#e8d820"/><stop offset=".56" stop-color="#3fb54a"/><stop offset=".76" stop-color="#1d7fd0"/><stop offset="1" stop-color="#6a2fa0"/></linearGradient>
<linearGradient id="gTri" x1="0" y1="0" x2="1" y2="1"><stop offset="0" stop-color="#f7c06a"/><stop offset="1" stop-color="#df8a2c"/></linearGradient>
<linearGradient id="gPenB" x1="0" y1="0" x2="0" y2="1"><stop offset="0" stop-color="#f3b60c"/><stop offset=".45" stop-color="#ffe000"/><stop offset="1" stop-color="#f0ae10"/></linearGradient>
<linearGradient id="gPen" x1="0" y1="1" x2="1" y2="0"><stop offset="0" stop-color="#f2b80e"/><stop offset=".5" stop-color="#ffe14a"/><stop offset="1" stop-color="#f4c41c"/></linearGradient>
<linearGradient id="gCalc" x1="0" y1="0" x2="0" y2="1"><stop offset="0" stop-color="#4a4a4a"/><stop offset="1" stop-color="#141414"/></linearGradient>
<linearGradient id="gOr" x1="0" y1="0" x2="0" y2="1"><stop offset="0" stop-color="#ff9a4a"/><stop offset="1" stop-color="#e2520e"/></linearGradient>
</defs>
<!-- lambda -->
<linearGradient id="gRainW" gradientUnits="userSpaceOnUse" x1="0" y1="-32" x2="0" y2="0.6"><stop offset="0" stop-color="#ee3524"/><stop offset=".15" stop-color="#f26a21"/><stop offset=".3" stop-color="#fbb515"/><stop offset=".42" stop-color="#e6e01e"/><stop offset=".56" stop-color="#3db54a"/><stop offset=".7" stop-color="#10a8e0"/><stop offset=".85" stop-color="#1c5db0"/><stop offset="1" stop-color="#6d2a90"/></linearGradient>
<g transform="translate(994 310.4) scale(1.07 1)"><text x="0" y="0" font-family="Noto Serif CJK SC,Liberation Serif,serif" font-weight="700" font-size="39" fill="url(#gRainW)">λ</text></g>
<!-- set-square + pencil -->
<path d="M1018 406.8 L1018 432.7 L991 432.7Z M1013.8 417 L1013.8 428.8 L1002.3 428.8Z" fill="url(#gTri)" fill-rule="evenodd" stroke="#c77a22" stroke-width=".5"/>
<path d="M994.6 430.6 L1015.6 410.4" stroke="#b86c1c" stroke-width=".9" stroke-dasharray=".5 1.1" opacity=".8"/>
<g transform="translate(997.2 407.6) rotate(44.4)">
<rect x="-1" y="-3.1" width="5" height="6.2" rx="1.4" fill="#e98f9b"/>
<rect x="3.2" y="-3.1" width="4.6" height="6.2" fill="#d4e6e8"/>
<rect x="7.6" y="-3.1" width="22" height="6.2" fill="url(#gPenB)"/>
<path d="M29.6 -3.1 L34.2 -0.9 L34.2 0.9 L29.6 3.1Z" fill="#e2d3a6"/>
<path d="M33.6 -1.1 L36 0 L33.6 1.1Z" fill="#6a6a6a"/>
</g>
<!-- W/J -->
<g font-family="Liberation Sans,sans-serif" font-weight="bold" font-size="37.4">
<text x="991.2" y="566.4" fill="#f6b81c" stroke="#f6b81c" stroke-width=".7" textLength="18.2" lengthAdjust="spacingAndGlyphs">W</text>
<text x="1008" y="566.4" fill="#1d9ad8" stroke="#1d9ad8" stroke-width=".5" textLength="6.4" lengthAdjust="spacingAndGlyphs">/</text>
<text x="1013.6" y="566.4" fill="#ee5f1e" stroke="#ee5f1e" stroke-width=".4" textLength="9.4" lengthAdjust="spacingAndGlyphs">J</text>
</g>
<!-- calculator -->
<rect x="992" y="845" width="30" height="32" rx="2.6" fill="#5e5e5e"/>
<rect x="993.8" y="846.8" width="26.4" height="28.4" rx="1.2" fill="#15110d"/>
<rect x="996" y="849.2" width="22" height="6.6" rx=".6" fill="#e9e7d2"/>
<text x="1017" y="855" text-anchor="end" font-family="Liberation Sans,sans-serif" font-weight="bold" font-size="5.8" fill="#4a4a4a">3.14</text>
<g fill="#a9a9a9"><circle cx="998.9" cy="862" r="3.1"/><circle cx="1006.7" cy="862" r="3.1"/><circle cx="998.9" cy="869.8" r="3.1"/><circle cx="1006.7" cy="869.8" r="3.1"/></g>
<g fill="#7d7d7d"><rect x="997.2" y="861.6" width="3.4" height=".9"/><rect x="1005" y="861.6" width="3.4" height=".9"/></g>
<rect x="1011.6" y="859" width="6.6" height="14.8" rx="3" fill="url(#gOr)"/>
<rect x="1013.4" y="865" width="3.2" height="1" fill="#fbe3d3"/><rect x="1013.4" y="867" width="3.2" height="1" fill="#fbe3d3"/>
</svg>

</div>
</body>
</html>
